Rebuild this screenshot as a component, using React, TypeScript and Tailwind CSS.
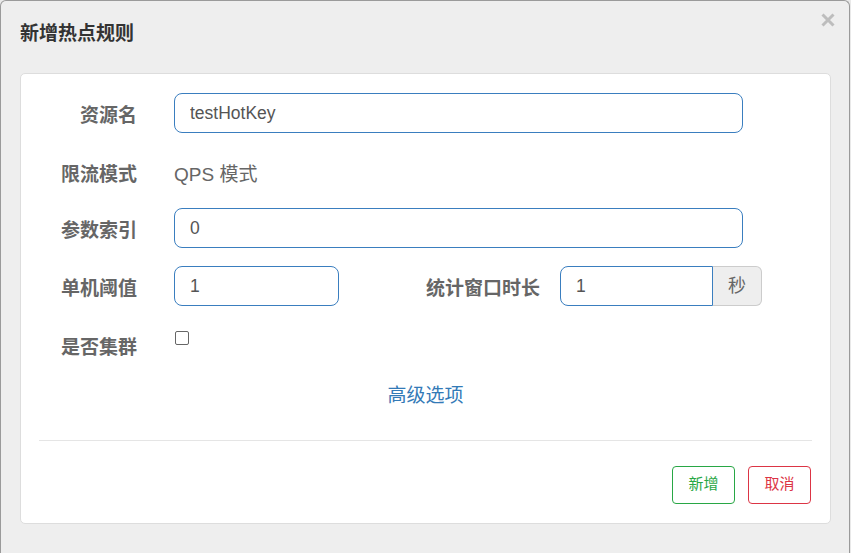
export default function App() {
  const label =
    "w-[116px] shrink-0 text-right text-[19px] font-bold text-[#666] pt-[9px]";
  const input =
    "h-[40px] rounded-[8px] border border-[#3a7ebf] bg-white px-[15px] text-[17.5px] text-[#555] outline-none";

  return (
    <div
      className="flex h-[553px] w-[851px] overflow-hidden bg-[#e9e9e9]"
      style={{ fontFamily: '"Liberation Sans", Arial, "Noto Sans CJK SC", sans-serif' }}
    >
      <div className="relative flex h-[600px] w-[850px] shrink-0 flex-col rounded-t-[6px] border border-b-0 border-[#9a9a9a] bg-[#eeeeee]">
        {/* header */}
        <div className="flex h-[72px] items-center justify-between pl-[19px] pr-[14px] pb-[6px]">
          <h3 className="text-[19px] font-bold text-[#333]">新增热点规则</h3>
          <button className="-mt-[28px] text-[#bdbdbd]">
            <svg width="14" height="14" viewBox="0 0 14 14">
              <path d="M1.5 1.5 L12.5 12.5 M12.5 1.5 L1.5 12.5" stroke="currentColor" strokeWidth="3" />
            </svg>
          </button>
        </div>

        {/* body */}
        <div className="ml-[19px] flex h-[451px] w-[811px] flex-col rounded-[5px] border border-[#dddddd] bg-white pt-[19px]">
          <div className="flex h-[40px]">
            <div className={label}>资源名</div>
            <input className={`${input} ml-[37px] w-[569px]`} defaultValue="testHotKey" />
          </div>

          <div className="mt-[22px] flex h-[40px] items-center">
            <div className="w-[116px] shrink-0 text-right text-[19px] font-bold text-[#666]">限流模式</div>
            <div className="ml-[37px] text-[19px] text-[#666]">QPS 模式</div>
          </div>

          <div className="mt-[13px] flex h-[40px]">
            <div className={label}>参数索引</div>
            <input className={`${input} ml-[37px] w-[569px]`} defaultValue="0" />
          </div>

          <div className="mt-[18px] flex h-[40px]">
            <div className={label}>单机阈值</div>
            <input className={`${input} ml-[37px] w-[165px]`} defaultValue="1" />
            <div className="w-[201px] shrink-0 text-right text-[19px] font-bold text-[#666] pt-[9px]">
              统计窗口时长
            </div>
            <div className="ml-[20px] flex h-[40px]">
              <input
                className="h-[40px] w-[153px] rounded-l-[8px] border border-[#3a7ebf] bg-white px-[15px] text-[17.5px] text-[#555] outline-none"
                defaultValue="1"
              />
              <span className="flex h-[40px] w-[49px] items-center justify-center rounded-r-[6px] border border-l-0 border-[#cccccc] bg-[#eeeeee] text-[18px] text-[#666]">
                秒
              </span>
            </div>
          </div>

          <div className="mt-[22px] flex h-[40px]">
            <div className="w-[116px] shrink-0 text-right text-[19px] font-bold text-[#666] pt-[6px]">是否集群</div>
            <div className="ml-[38px] pt-[3px]">
              <div className="h-[14px] w-[14px] rounded-[2px] border border-[#666] bg-white" />
            </div>
          </div>

          <div className="mt-[14px] text-center text-[19px] text-[#337ab7]">高级选项</div>

          <div className="mx-[18px] mt-[29px] border-t border-[#e5e5e5]" />

          <div className="mt-[25px] flex justify-end gap-[13px] pr-[19px]">
            <button className="h-[38px] w-[63px] rounded-[4px] border border-[#28a745] text-[15px] text-[#28a745]">
              新增
            </button>
            <button className="h-[38px] w-[63px] rounded-[4px] border border-[#dc3545] text-[15px] text-[#dc3545]">
              取消
            </button>
          </div>
        </div>
      </div>
    </div>
  );
}
